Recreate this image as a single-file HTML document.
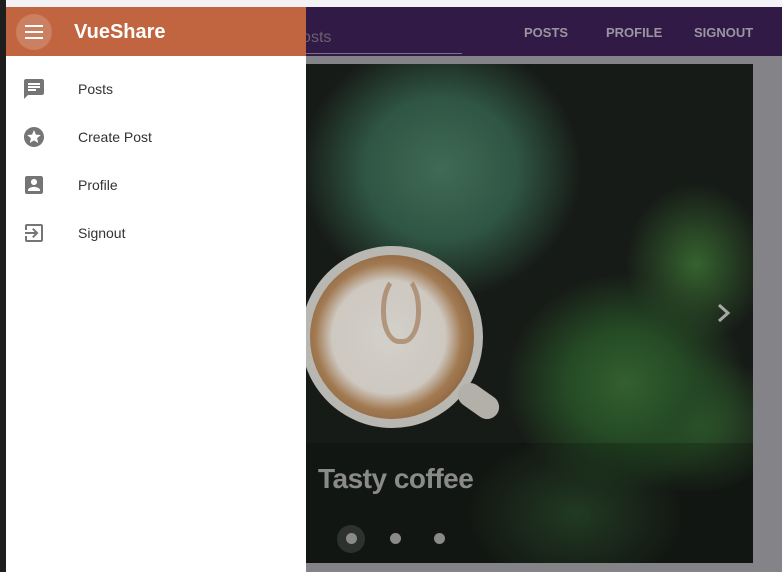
<!DOCTYPE html>
<html><head><meta charset="utf-8"><style>
*{margin:0;padding:0;box-sizing:border-box}
body{width:782px;height:572px;overflow:hidden;position:relative;background:#fff;font-family:"Liberation Sans",Roboto,sans-serif}
.left{position:absolute;left:0;top:0;width:6px;height:572px;background:#1e1e1e}
.top{position:absolute;left:6px;top:0;width:776px;height:7px;background:#f3f3f5}
.bg{position:absolute;left:6px;top:7px;width:776px;height:565px;background:#848388}
.tb{position:absolute;left:6px;top:7px;width:776px;height:49px;background:#311a45}
.nav{position:absolute;top:25px;color:#9a96a0;font-weight:bold;font-size:13px}
.search{position:absolute;left:238px;top:29px;color:#6a6072;font-size:16px}
.line{position:absolute;left:200px;top:53px;width:262px;height:1px;background:#7a7280}
.img{position:absolute;left:306px;top:64px;width:447px;height:499px;overflow:hidden;
background:
radial-gradient(ellipse 140px 130px at 135px 105px,#3f6a55 0,#2f5544 55%,rgba(25,40,32,0) 100%),
radial-gradient(ellipse 120px 110px at 320px 320px,#33602f 0,#254a25 50%,rgba(20,35,20,0) 100%),
radial-gradient(ellipse 70px 80px at 390px 200px,#35632f 0,rgba(20,35,20,0) 100%),
radial-gradient(ellipse 90px 70px at 390px 360px,#2f5a2c 0,rgba(20,35,20,0) 100%),
radial-gradient(ellipse 110px 80px at 270px 450px,#29472a 0,rgba(20,35,20,0) 100%),
#171b17}
.cup{position:absolute;left:-5px;top:182px;width:182px;height:182px;border-radius:50%;background:#b9b7b2}
.cof{position:absolute;left:4px;top:191px;width:164px;height:164px;border-radius:50%;background:radial-gradient(circle at 48% 50%,#d3d0ca 0,#cdc8c0 48%,#a27a52 62%,#7c5331 85%,#6a4428 100%)}
.art{position:absolute;left:75px;top:210px;width:40px;height:70px;border-radius:50% 50% 45% 45%;border:5px solid rgba(150,105,65,.55);border-top-color:transparent}
.handle{position:absolute;left:150px;top:325px;width:45px;height:24px;background:#b3b0aa;border-radius:12px;transform:rotate(35deg)}
.cap{position:absolute;left:0;top:379px;width:447px;height:120px;background:rgba(0,0,0,.18)}
.cap span{position:absolute;left:12px;top:20px;font-size:28px;font-weight:bold;color:#8a8a8a;letter-spacing:-0.5px}
.dot{position:absolute;width:11px;height:11px;border-radius:50%;background:#8a8a8a;top:469px}
.drawer{position:absolute;left:6px;top:7px;width:300px;height:565px;background:#fff}
.dh{height:49px;background:#c0653f;position:relative}
.hb{position:absolute;left:10px;top:7px;width:36px;height:36px;border-radius:50%;background:rgba(255,255,255,.18)}
.hb i{position:absolute;left:9px;width:18px;height:2px;background:#fff}
.title{position:absolute;left:68px;top:14px;color:#fff;font-size:20px;font-weight:bold}
.it{position:absolute;left:0;height:48px;width:300px}
.it svg{position:absolute;left:16px;top:12px}
.it span{position:absolute;left:72px;top:16px;font-size:14px;color:#333}
</style></head><body>
<div class="left"></div><div class="top"></div><div class="bg"></div>
<div class="tb"></div>
<div class="search">Search posts</div><div class="line"></div>
<div class="nav" style="left:524px">POSTS</div>
<div class="nav" style="left:606px">PROFILE</div>
<div class="nav" style="left:694px">SIGNOUT</div>
<div class="img">
<div class="cup"></div><div class="cof"></div><div class="art"></div><div class="handle"></div>
<svg style="position:absolute;left:410px;top:238px" width="16" height="22" viewBox="0 0 16 22"><path d="M3 3l9 8-9 8" stroke="#a8a8a8" stroke-width="3" fill="none"/></svg>
<div class="cap"><span>Tasty coffee</span></div>
<div style="position:absolute;left:31px;top:461px;width:28px;height:28px;border-radius:50%;background:rgba(255,255,255,.12)"></div>
<div class="dot" style="left:40px"></div><div class="dot" style="left:84px"></div><div class="dot" style="left:128px"></div>
</div>
<div class="drawer">
<div class="dh"><div class="hb"><i style="top:11px"></i><i style="top:17px"></i><i style="top:23px"></i></div><div class="title">VueShare</div></div>
<div class="it" style="top:58px"><svg width="24" height="24" viewBox="0 0 24 24"><path fill="#757575" d="M20 2H4c-1.1 0-2 .9-2 2v18l4-4h14c1.1 0 2-.9 2-2V4c0-1.1-.9-2-2-2zM6 9h12v2H6V9zm8 5H6v-2h8v2zm4-6H6V6h12v2z"/></svg><span>Posts</span></div>
<div class="it" style="top:106px"><svg width="24" height="24" viewBox="0 0 24 24"><path fill="#757575" d="M12 2C6.5 2 2 6.5 2 12s4.5 10 10 10 10-4.5 10-10S17.5 2 12 2zm4.2 16L12 15.4 7.8 18l1.1-4.8-3.7-3.2 4.9-.4L12 5l1.9 4.6 4.9.4-3.7 3.2 1.1 4.8z"/></svg><span>Create Post</span></div>
<div class="it" style="top:154px"><svg width="24" height="24" viewBox="0 0 24 24"><path fill="#757575" d="M3 5v14a2 2 0 0 0 2 2h14c1.1 0 2-.9 2-2V5c0-1.1-.9-2-2-2H5a2 2 0 0 0-2 2zm12 4c0 1.7-1.3 3-3 3s-3-1.3-3-3 1.3-3 3-3 3 1.3 3 3zm-9 8c0-2 4-3.1 6-3.1s6 1.1 6 3.1v1H6v-1z"/></svg><span>Profile</span></div>
<div class="it" style="top:202px"><svg width="24" height="24" viewBox="0 0 24 24"><path fill="#757575" d="M10.1 15.6l1.4 1.4 5-5-5-5-1.4 1.4 2.6 2.6H3v2h9.7l-2.6 2.6zM19 3H5a2 2 0 0 0-2 2v4h2V5h14v14H5v-4H3v4a2 2 0 0 0 2 2h14c1.1 0 2-.9 2-2V5c0-1.1-.9-2-2-2z"/></svg><span>Signout</span></div>
</div>
</body></html>
